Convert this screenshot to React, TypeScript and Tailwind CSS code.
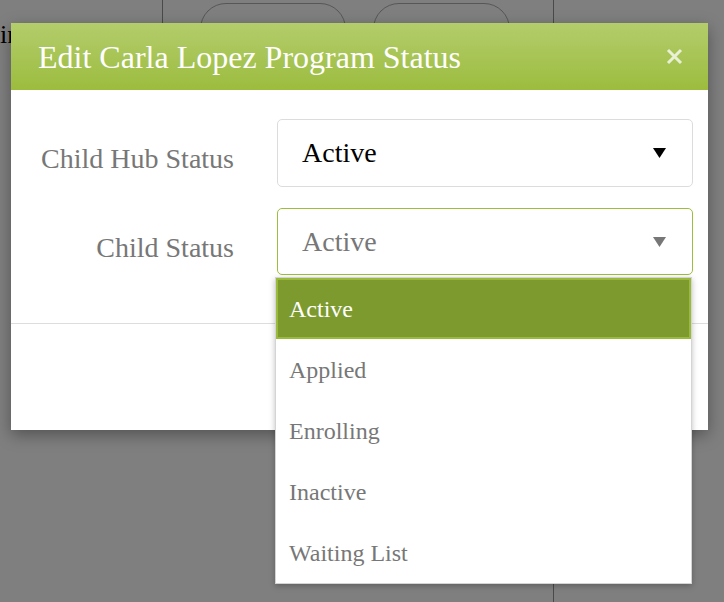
import React from "react";

const options = ["Active", "Applied", "Enrolling", "Inactive", "Waiting List"];

function Caret({ color }: { color: string }) {
  return (
    <svg width="13" height="10" viewBox="0 0 13 10">
      <path d="M0 0 H13 L6.5 10 Z" fill={color} />
    </svg>
  );
}

function App() {
  return (
    <div className="relative w-[724px] h-[602px] overflow-hidden bg-[#7f7f7f] font-['Liberation_Serif',serif]">
      {/* Page behind the overlay */}
      <div className="flex h-full">
        <div className="w-[163px] h-[80px] border-r-[1.5px] border-[#4a4a4a] text-[26px] text-black pt-[22px] leading-none">
          in
        </div>
        <div className="w-[391px] h-full border-r-[1.5px] border-[#4a4a4a]">
          <div className="flex gap-[27px] pl-[37px] pt-[3px]">
            <div className="w-[146px] h-[60px] rounded-[26px] border-[1.5px] border-[#575757]"></div>
            <div className="w-[137px] h-[60px] rounded-[26px] border-[1.5px] border-[#575757]"></div>
          </div>
        </div>
      </div>

      {/* Modal */}
      <div className="absolute left-[11px] top-[23px] w-[697px] bg-white shadow-[0_5px_15px_rgba(0,0,0,0.35)]">
        <div className="h-[67px] flex items-center justify-between pl-[27px] pr-[25px] bg-linear-to-b from-[#b3cd6b] to-[#9cbc3d]">
          <h4 className="text-[32px] leading-none text-white">Edit Carla Lopez Program Status</h4>
          <svg width="17" height="17" viewBox="0 0 17 17" className="opacity-75">
            <path d="M2 2 L15 15 M15 2 L2 15" stroke="#ffffff" strokeWidth="3" />
          </svg>
        </div>

        <div className="pt-[29px] pb-[48px] border-b border-[#dddddd]">
          <div className="grid grid-cols-[223px_416px] gap-x-[43px] gap-y-[21px]">
            <label className="flex items-center justify-end pt-[12px] text-[28px] leading-none text-[#777777]">
              Child Hub Status
            </label>
            <div className="h-[68px] flex items-center justify-between pl-[24px] pr-[26px] rounded-[5px] border-[1.5px] border-[#dcdcdc] text-[28px] leading-none text-black">
              <span>Active</span>
              <Caret color="#000000" />
            </div>

            <label className="flex items-center justify-end pt-[12px] text-[28px] leading-none text-[#777777]">
              Child Status
            </label>
            <div className="relative">
              <div className="h-[67px] flex items-center justify-between pl-[24px] pr-[26px] rounded-[5px] border-[1.5px] border-[#9dbd3f] text-[28px] leading-none text-[#777777]">
                <span>Active</span>
                <Caret color="#777777" />
              </div>

              {/* Open option list */}
              <ul className="absolute z-10 left-[-2px] top-[calc(100%+2px)] w-[417px] bg-white border border-[#d4d4d4] shadow-[0_2px_6px_rgba(0,0,0,0.25)]">
                {options.map((opt, i) => (
                  <li
                    key={opt}
                    className={
                      i === 0
                        ? "h-[61px] flex items-center pl-[13px] text-[24px] leading-none text-white bg-[#7c9a2e] shadow-[inset_0_0_0_2px_#9aba3b]"
                        : "h-[61px] flex items-center pl-[13px] text-[24px] leading-none text-[#777777]"
                    }
                  >
                    {opt}
                  </li>
                ))}
              </ul>
            </div>
          </div>
        </div>

        <div className="h-[106px]"></div>
      </div>
    </div>
  );
}

export default App;
